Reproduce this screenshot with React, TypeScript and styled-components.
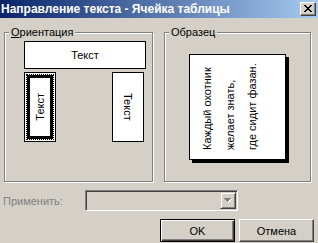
import React from "react";
import styled, { createGlobalStyle } from "styled-components";

const GlobalStyle = createGlobalStyle`
  html, body {
    margin: 0;
    padding: 0;
    background: #d4d0c8;
  }
  body {
    font-family: "Liberation Sans", Arial, sans-serif;
    font-size: 11px;
  }
`;

///--------------------------------------------------------------------
const Window = styled.div`
  width: 318px;
  height: 243px;
  background: #d4d0c8;
  display: flex;
  flex-direction: column;
  overflow: hidden;
  color: #000;
`;

const TitleBar = styled.div`
  height: 18px;
  flex: none;
  display: flex;
  align-items: center;
  justify-content: space-between;
  padding: 0 2px 0 1px;
  background: linear-gradient(to right, #0a246a, #a6caf0);
  color: #fff;
  font-weight: bold;
  font-size: 12px;
  white-space: nowrap;
`;

const CloseButton = styled.div`
  box-sizing: border-box;
  width: 16px;
  height: 14px;
  margin-top: -1px;
  background: #d4d0c8;
  border: 1px solid;
  border-color: #fff #404040 #404040 #fff;
  box-shadow: inset -1px -1px #808080;
  display: flex;
  align-items: center;
  justify-content: center;
`;

const GroupsRow = styled.div`
  display: flex;
  gap: 11px;
  padding: 14px 0 0 4px;
`;

const GroupBox = styled.div<{ $width: number }>`
  position: relative;
  box-sizing: border-box;
  width: ${(p) => p.$width}px;
  height: 150px;
  border: 1px solid #808080;
  box-shadow: inset 1px 1px #fff, 1px 1px #fff;
`;

const GroupLabel = styled.span`
  position: absolute;
  top: -7px;
  left: 4px;
  padding: 0 2px;
  line-height: 13px;
  background: #d4d0c8;
`;

const OrientationBody = styled.div`
  padding: 8px 0 0 19px;
`;

const HorizontalOption = styled.div`
  box-sizing: border-box;
  width: 122px;
  height: 28px;
  border: 1px solid #000;
  background: #fff;
  display: flex;
  align-items: center;
  justify-content: center;
`;

const VerticalRow = styled.div`
  width: 120px;
  margin-top: 3px;
  display: flex;
  justify-content: space-between;
`;

const VerticalOption = styled.div<{ $selected?: boolean }>`
  box-sizing: border-box;
  width: 32px;
  height: 70px;
  border: 1px solid #000;
  background: #fff;
  padding: ${(p) => (p.$selected ? "1px" : "0")};
  display: flex;
  align-items: stretch;
  justify-content: stretch;
`;

const FocusRing = styled.div`
  flex: 1;
  display: flex;
  border: 1px dotted #000;
`;

const Picked = styled.div`
  flex: 1;
  display: flex;
  align-items: center;
  justify-content: center;
  border: 3px solid #000;
`;

const Centered = styled.div`
  flex: 1;
  display: flex;
  align-items: center;
  justify-content: center;
`;

const SideText = styled.span<{ $up?: boolean }>`
  writing-mode: vertical-rl;
  white-space: nowrap;
  transform: ${(p) => (p.$up ? "rotate(180deg)" : "none")};
`;

const SampleBody = styled.div`
  padding: 21px 0 0 24px;
`;

const SamplePage = styled.div`
  box-sizing: border-box;
  width: 97px;
  height: 106px;
  border: 1px solid #000;
  background: #fff;
  box-shadow: 3px 3px 0 #000;
  display: flex;
  align-items: flex-end;
  padding: 0 0 9px 6px;
`;

const SampleText = styled.div`
  writing-mode: vertical-rl;
  transform: rotate(180deg);
  height: 88px;
  line-height: 22.5px;
  white-space: nowrap;
`;

const ApplyRow = styled.div`
  display: flex;
  align-items: center;
  margin-top: 8px;
  padding-left: 3px;
`;

const ApplyLabel = styled.span`
  width: 82px;
  color: #808080;
`;

const Combo = styled.div`
  box-sizing: border-box;
  width: 153px;
  height: 21px;
  padding: 1px;
  border: 1px solid;
  border-color: #808080 #fff #fff #808080;
  box-shadow: inset 1px 1px #404040, inset -1px -1px #d4d0c8;
  display: flex;
  justify-content: flex-end;
`;

const DropButton = styled.div`
  box-sizing: border-box;
  width: 16px;
  height: 17px;
  border: 1px solid;
  border-color: #d4d0c8 #404040 #404040 #d4d0c8;
  box-shadow: inset 1px 1px #fff, inset -1px -1px #808080;
  display: flex;
  align-items: center;
  justify-content: center;
`;

const ButtonsRow = styled.div`
  display: flex;
  justify-content: flex-end;
  gap: 4px;
  margin-top: 8px;
  padding-right: 4px;
`;

const Button = styled.button<{ $default?: boolean }>`
  box-sizing: border-box;
  width: 75px;
  height: 23px;
  padding: 0;
  font-family: "Liberation Sans", Arial, sans-serif;
  font-size: 11px;
  color: #000;
  background: #d4d0c8;
  border: 1px solid;
  border-color: ${(p) =>
    p.$default ? "#000" : "#fff #404040 #404040 #fff"};
  box-shadow: ${(p) =>
    p.$default
      ? "inset 1px 1px #fff, inset -1px -1px #404040, inset -2px -2px #808080"
      : "inset -1px -1px #808080"};
`;

////---------------------------------------------------------------

const CloseGlyph = () => (
  <svg width="8" height="7" viewBox="0 0 8 7" shapeRendering="crispEdges">
    <path
      fill="#000"
      d="M0 0h2v1H0z M6 0h2v1H6z M1 1h2v1H1z M5 1h2v1H5z M2 2h4v1H2z M3 3h2v1H3z M2 4h4v1H2z M1 5h2v1H1z M5 5h2v1H5z M0 6h2v1H0z M6 6h2v1H6z"
    />
  </svg>
);

const DisabledArrow = () => (
  <svg width="8" height="5" viewBox="0 0 8 5" shapeRendering="crispEdges">
    <path fill="#fff" d="M1 1h7v1H1z M2 2h5v1H2z M3 3h3v1H3z M4 4h1v1H4z" />
    <path fill="#808080" d="M0 0h7v1H0z M1 1h5v1H1z M2 2h3v1H2z M3 3h1v1H3z" />
  </svg>
);

const sampleLines = ["Каждый охотник", "желает знать,", "где сидит фазан."];

export default function App() {
  return (
    <>
      <GlobalStyle />
      <Window>
        <TitleBar>
          <span>Направление текста - Ячейка таблицы</span>
          <CloseButton>
            <CloseGlyph />
          </CloseButton>
        </TitleBar>

        <GroupsRow>
          <GroupBox $width={149}>
            <GroupLabel>
              <u>О</u>риентация
            </GroupLabel>
            <OrientationBody>
              <HorizontalOption>Текст</HorizontalOption>
              <VerticalRow>
                <VerticalOption $selected>
                  <FocusRing>
                    <Picked>
                      <SideText $up>Текст</SideText>
                    </Picked>
                  </FocusRing>
                </VerticalOption>
                <VerticalOption>
                  <Centered>
                    <SideText>Текст</SideText>
                  </Centered>
                </VerticalOption>
              </VerticalRow>
            </OrientationBody>
          </GroupBox>

          <GroupBox $width={147}>
            <GroupLabel>Образец</GroupLabel>
            <SampleBody>
              <SamplePage>
                <SampleText>
                  {sampleLines.map((line) => (
                    <div key={line}>{line}</div>
                  ))}
                </SampleText>
              </SamplePage>
            </SampleBody>
          </GroupBox>
        </GroupsRow>

        <ApplyRow>
          <ApplyLabel>Применить:</ApplyLabel>
          <Combo>
            <DropButton>
              <DisabledArrow />
            </DropButton>
          </Combo>
        </ApplyRow>

        <ButtonsRow>
          <Button $default>OK</Button>
          <Button>Отмена</Button>
        </ButtonsRow>
      </Window>
    </>
  );
}
